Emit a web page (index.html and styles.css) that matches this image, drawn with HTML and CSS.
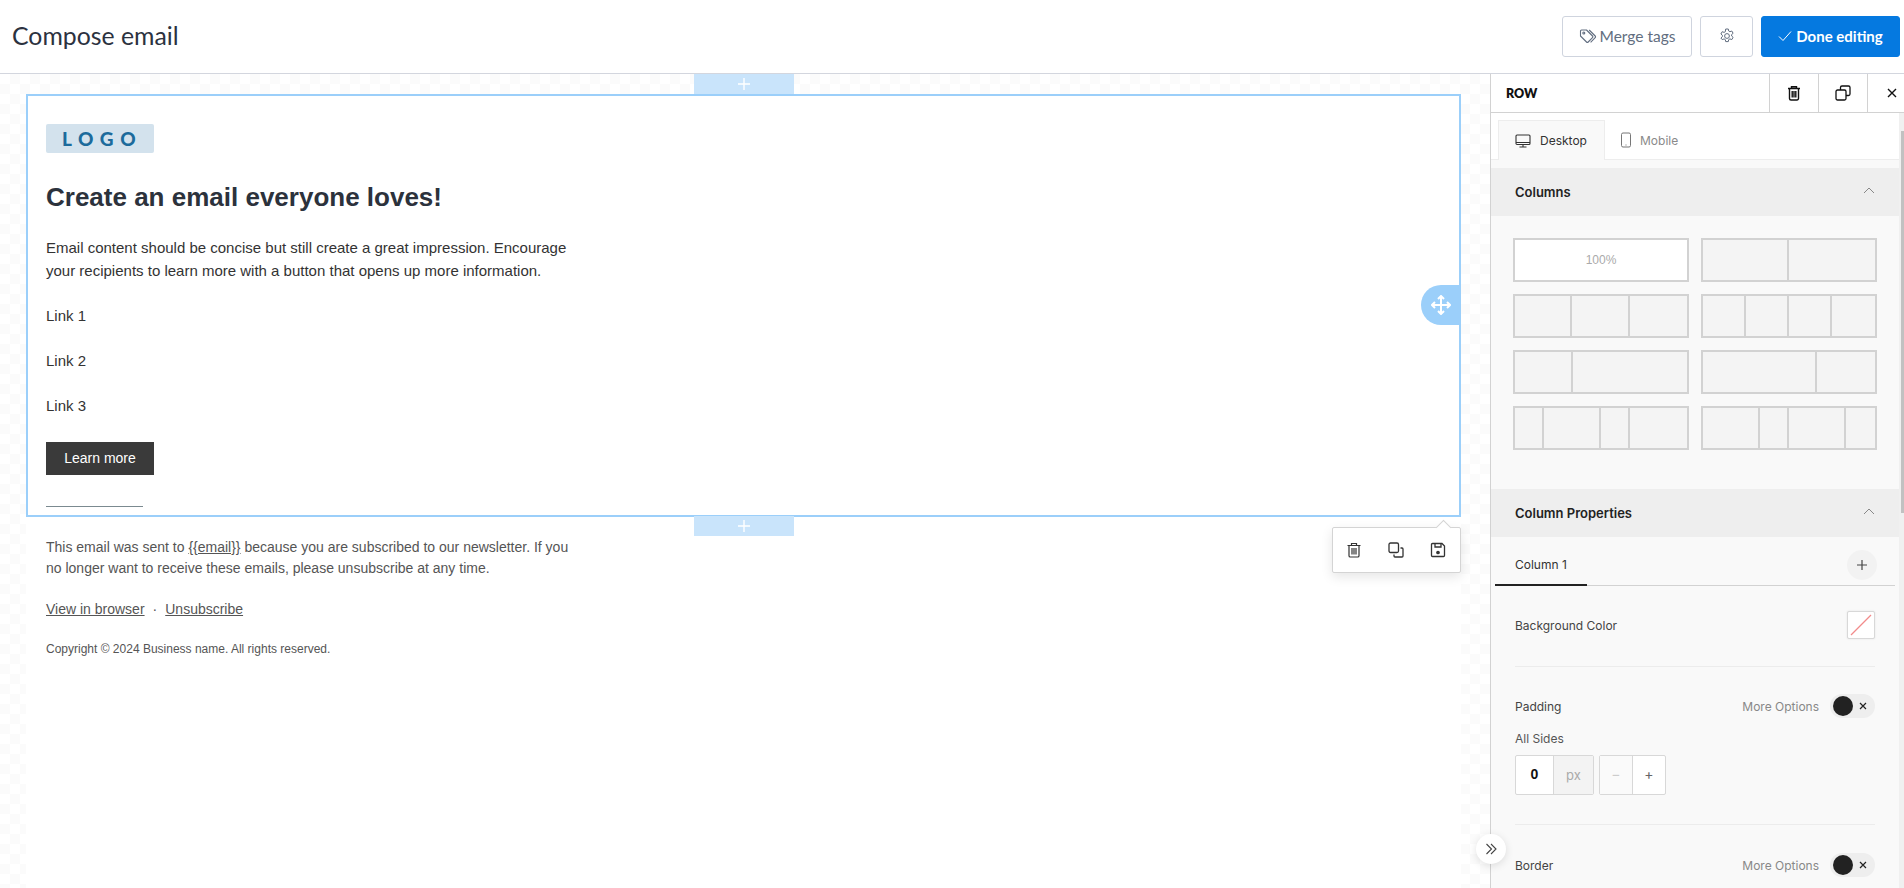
FILE: index.html
```html
<!DOCTYPE html>
<html lang="en">
<head>
<meta charset="utf-8">
<title>Compose email</title>
<link rel="stylesheet" href="styles.css">
</head>
<body>
<header class="topbar">
  <h1 class="page-title">Compose email</h1>
  <div class="top-actions">
    <button class="btn btn-merge">
      <svg class="ic18" viewBox="0 0 18 18" fill="none" stroke="#626e80" stroke-width="1.1" stroke-linejoin="round"><path d="M1.500 4v5l6 6a1.200 1.200 0 0 0 1.700 0l4.300-4.300a1.200 1.200 0 0 0 0-1.700l-6-6H2.500a1 1 0 0 0-1 1z"/><path d="M10.200 3l6 6a1.200 1.200 0 0 1 0 1.700l-4.600 4.600"/><circle cx="4.800" cy="6" r="1"/></svg>
      <span>Merge tags</span>
    </button>
    <button class="btn btn-gear" aria-label="Settings">
      <svg class="ic16" viewBox="0 0 16 16" fill="none" stroke="#626e80" stroke-width="1"><circle cx="8" cy="8" r="2.400"/><path d="M6.700 1h2.600l.4 2 1.200.7 1.900-.7 1.300 2.300-1.500 1.300v1.400l1.500 1.300-1.300 2.300-1.900-.7-1.200.7-.4 2H6.700l-.4-2-1.200-.7-1.900.7L1.900 10l1.500-1.300V7.300L1.900 6l1.300-2.300 1.900.7 1.200-.7z" stroke-linejoin="round"/></svg>
    </button>
    <button class="btn btn-done">
      <svg class="ic14" viewBox="0 0 14 14" fill="none" stroke="#fff" stroke-width="1"><path d="M1 7.500l4 4 8-9"/></svg>
      <span>Done editing</span>
    </button>
  </div>
</header>

<div class="workspace">
  <main class="canvas">
    <div class="email">
      <section class="row-selected">
        <div class="logo">LOGO</div>
        <h2 class="headline">Create an email everyone loves!</h2>
        <p class="body-text">Email content should be concise but still create a great impression. Encourage your recipients to learn more with a button that opens up more information.</p>
        <p class="link-line">Link 1</p>
        <p class="link-line">Link 2</p>
        <p class="link-line">Link 3</p>
        <a class="cta">Learn more</a>
        <hr class="rule">
        <div class="add-bar add-top"><svg viewBox="0 0 12 12" stroke="#fff" stroke-width="1.400"><path d="M6 0v12M0 6h12"/></svg></div>
        <div class="add-bar add-bottom"><svg viewBox="0 0 12 12" stroke="#fff" stroke-width="1.400"><path d="M6 0v12M0 6h12"/></svg></div>
        <div class="mover">
          <svg viewBox="0 0 20 20" fill="none" stroke="#fff" stroke-width="2"><path d="M10 1v18M1 10h18M7 4l3-3 3 3M7 16l3 3 3-3M4 7l-3 3 3 3M16 7l3 3-3 3"/></svg>
        </div>
        <div class="row-tools">
          <svg class="ic16" viewBox="0 0 16 16" fill="none" stroke="#333" stroke-width="1.200"><path d="M1.500 3.500h13M5.500 3.500V1.500h5v2M3 3.500v10.200A1.300 1.300 0 0 0 4.300 15h7.400a1.300 1.300 0 0 0 1.300-1.300V3.500M6 6v6.500M8 6v6.500M10 6v6.500"/></svg>
          <svg class="ic16" viewBox="0 0 16 16" fill="none" stroke="#333" stroke-width="1.300"><rect x="1" y="1" width="9.500" height="9.500" rx="1.500"/><path d="M12.500 6H14a1 1 0 0 1 1 1v7a1 1 0 0 1-1 1H7a1 1 0 0 1-1-1v-1.500"/></svg>
          <svg class="ic16" viewBox="0 0 16 16" fill="none" stroke="#333" stroke-width="1.300"><path d="M2.500 1.500h9.500l2.500 2.500v9.500a1 1 0 0 1-1 1h-11a1 1 0 0 1-1-1v-11a1 1 0 0 1 1-1z"/><path d="M5 1.500v3.500h6V1.500"/><circle cx="8" cy="10.500" r="1.200" fill="#333"/></svg>
        </div>
      </section>
      <footer class="mail-footer">
        <p class="foot-text">This email was sent to <u>{{email}}</u> because you are subscribed to our newsletter. If you no longer want to receive these emails, please unsubscribe at any time.</p>
        <p class="foot-links"><u>View in browser</u><span class="dot">·</span><u>Unsubscribe</u></p>
        <p class="foot-copy">Copyright © 2024 Business name. All rights reserved.</p>
      </footer>
    </div>
    <button class="collapse" aria-label="Collapse">
      <svg viewBox="0 0 12 12" fill="none" stroke="#444" stroke-width="1.100"><path d="M1.500 1l5 5-5 5M6 1l5 5-5 5"/></svg>
    </button>
  </main>

  <aside class="panel">
    <div class="panel-head">
      <span class="panel-title">ROW</span>
      <button class="head-btn"><svg class="ic16" viewBox="0 0 16 16" fill="none" stroke="#111" stroke-width="1.400"><path d="M2 3.500h12M5.500 3.500V1.800h5v1.700M3.500 3.500v10A1.500 1.500 0 0 0 5 15h6a1.500 1.500 0 0 0 1.500-1.500v-10M6.200 6v6.500M8 6v6.500M9.800 6v6.500"/></svg></button>
      <button class="head-btn"><svg class="ic16" viewBox="0 0 16 16" fill="none" stroke="#111" stroke-width="1.300"><path d="M5.500 5V2.500A1.500 1.500 0 0 1 7 1h6.500A1.500 1.500 0 0 1 15 2.500V9a1.500 1.500 0 0 1-1.500 1.500H11"/><rect x="1" y="5" width="10" height="10" rx="1.500"/></svg></button>
      <button class="head-btn head-close"><svg class="ic12" viewBox="0 0 12 12" stroke="#111" stroke-width="1.400"><path d="M2 2l8 8M10 2l-8 8"/></svg></button>
    </div>
    <div class="panel-scroll">
      <div class="panel-body">
        <div class="device-tabs">
          <div class="device-tab active">
            <svg class="ic16" viewBox="0 0 16 16" fill="none" stroke="#333" stroke-width="1.100"><rect x="1" y="2" width="14" height="9.500" rx="1"/><path d="M1 9.500h14M8 11.500V14M4.500 14h7"/></svg>
            <span>Desktop</span>
          </div>
          <div class="device-tab">
            <svg class="ic16" viewBox="0 0 16 16" fill="none" stroke="#777" stroke-width="1"><rect x="3.500" y="1" width="9" height="14" rx="1.500"/><path d="M7.500 13h1"/></svg>
            <span>Mobile</span>
          </div>
        </div>

        <div class="section-head">
          <span>Columns</span>
          <svg class="chev" viewBox="0 0 12 7" fill="none" stroke="#888" stroke-width="1"><path d="M1 6l5-5 5 5"/></svg>
        </div>
        <div class="layouts">
          <div class="layout solid"><span class="cell pct">100%</span></div>
          <div class="layout"><span class="cell g1"></span><span class="cell g1"></span></div>
          <div class="layout"><span class="cell g1"></span><span class="cell g1"></span><span class="cell g1"></span></div>
          <div class="layout"><span class="cell g1"></span><span class="cell g1"></span><span class="cell g1"></span><span class="cell g1"></span></div>
          <div class="layout"><span class="cell g1"></span><span class="cell g2"></span></div>
          <div class="layout"><span class="cell g2"></span><span class="cell g1"></span></div>
          <div class="layout"><span class="cell g1"></span><span class="cell g2"></span><span class="cell g1"></span><span class="cell g2"></span></div>
          <div class="layout"><span class="cell g2"></span><span class="cell g1"></span><span class="cell g2"></span><span class="cell g1"></span></div>
        </div>

        <div class="section-head">
          <span>Column Properties</span>
          <svg class="chev" viewBox="0 0 12 7" fill="none" stroke="#888" stroke-width="1"><path d="M1 6l5-5 5 5"/></svg>
        </div>
        <div class="col-tabs">
          <span class="col-tab">Column 1</span>
          <button class="col-add"><svg class="ic12" viewBox="0 0 12 12" stroke="#444" stroke-width="1.200"><path d="M6 1v10M1 6h10"/></svg></button>
        </div>
        <div class="prop prop-bg">
          <span class="prop-label">Background Color</span>
          <div class="swatch"><svg viewBox="0 0 24 24" stroke="#f28b8b" stroke-width="1.300"><path d="M2 22L22 2"/></svg></div>
        </div>
        <div class="prop prop-pad">
          <div class="prop-line">
            <span class="prop-label">Padding</span>
            <span class="more">More Options</span>
            <span class="toggle"><i class="knob"></i><svg class="tx" viewBox="0 0 8 8" stroke="#222" stroke-width="1.200"><path d="M1 1l6 6M7 1L1 7"/></svg></span>
          </div>
          <div class="sub-label">All Sides</div>
          <div class="steppers">
            <div class="num-field"><span class="num">0</span><span class="unit">px</span></div>
            <div class="step-field"><span class="step off">−</span><span class="step">+</span></div>
          </div>
        </div>
        <div class="prop prop-border">
          <div class="prop-line">
            <span class="prop-label">Border</span>
            <span class="more">More Options</span>
            <span class="toggle"><i class="knob"></i><svg class="tx" viewBox="0 0 8 8" stroke="#222" stroke-width="1.200"><path d="M1 1l6 6M7 1L1 7"/></svg></span>
          </div>
        </div>
      </div>
      <div class="scrollbar"><div class="thumb"></div></div>
    </div>
  </aside>
</div>
</body>
</html>
```
FILE: styles.css
```css
* { box-sizing: border-box; }
html, body { margin: 0; height: 100%; overflow: hidden; background: #fff; }
body { font-family: "Liberation Sans", Arial, sans-serif; color: #222; }
p, h1, h2 { margin: 0; }
button { font: inherit; padding: 0; background: none; border: 0; }
svg { display: block; }
.ic18 { width: 18px; height: 18px; }
.ic16 { width: 16px; height: 16px; }
.ic14 { width: 14px; height: 14px; }
.ic12 { width: 12px; height: 12px; }

.topbar { height: 74px; border-bottom: 1px solid #d3d6de; display: flex; align-items: center; justify-content: space-between; padding: 0 4px 0 12px; }
.page-title { font: 400 24.800px Lato, "Noto Sans", sans-serif; color: #2c3240; margin-top: -2px; }
.top-actions { display: flex; gap: 8px; }
.btn { height: 41px; border: 1px solid #cfd4de; border-radius: 3px; display: flex; align-items: center; justify-content: center; font: 400 15.500px Lato, "Noto Sans", sans-serif; color: #626e80; background: #fff; padding-bottom: 1px; }
.btn-merge { width: 130px; gap: 3px; }
.btn-gear { width: 53px; }
.btn-done { width: 139px; gap: 4px; background: #0579e0; border-color: #0579e0; color: #fff; font-size: 15px; font-weight: 700; }

.workspace { display: flex; height: 814px; }
.canvas { position: relative; flex: 1; padding: 20px 0 0 26px;
  background: repeating-conic-gradient(#fbfbfb 0 25%, #ffffff 0 50%) 0 0 / 20px 20px; }
.email { width: 1435px; height: 100%; background: #fff; }

.row-selected { position: relative; height: 423px; border: 2px solid #9bcffa; padding: 28px 0 0 18px; }
.logo { width: 108px; height: 29px; background: #d3e2ed; border-radius: 2px; color: #1c6b9c; font: 900 19px/29px Lato, "Noto Sans", sans-serif; letter-spacing: 6.500px; text-align: center; padding-left: 4px; }
.headline { font: 700 26px/34px "Liberation Sans", Arial, sans-serif; color: #2c323c; margin-top: 27px; }
.body-text { width: 530px; font-size: 15px; line-height: 23px; color: #333; margin-top: 22px; }
.link-line { font-size: 15px; line-height: 23px; color: #333; margin-top: 22px; }
.cta { display: block; width: 108px; height: 33px; margin-top: 25px; background: #3a3a3a; color: #fff; font-size: 14px; line-height: 32px; text-align: center; }
.rule { width: 97px; height: 1px; margin: 31px 0 0; border: 0; background: #7b8a90; }

.add-bar { position: absolute; left: 666px; width: 100px; height: 20px; background: #c9e4fb; display: flex; align-items: center; justify-content: center; }
.add-bar svg { width: 12px; height: 12px; }
.add-top { top: -22px; }
.add-bottom { bottom: -21px; }
.mover { position: absolute; right: -2px; top: 189px; width: 40px; height: 40px; border-radius: 20px 0 0 20px; background: #9bcffa; display: flex; align-items: center; justify-content: center; }
.mover svg { width: 20px; height: 20px; }
.row-tools { position: absolute; right: -2px; top: 431px; width: 129px; height: 46px; background: #fff; border: 1px solid #d4d4d4; border-radius: 2px; box-shadow: 0 4px 12px rgba(0,0,0,.1); display: flex; align-items: center; justify-content: space-between; padding: 0 14px 0 13px; }
.row-tools::before { content: ""; position: absolute; top: -6px; right: 11px; width: 10px; height: 10px; background: #fff; border-left: 1px solid #d4d4d4; border-top: 1px solid #d4d4d4; transform: rotate(45deg); }

.mail-footer { padding: 20px 0 0 20px; color: #555; }
.foot-text { width: 535px; font-size: 14px; line-height: 21px; }
.foot-links { font-size: 14px; line-height: 21px; margin-top: 20px; }
.dot { margin: 0 8px; }
.foot-copy { font-size: 12px; line-height: 16px; margin-top: 21px; }

.collapse { position: absolute; right: -16px; top: 760px; width: 30px; height: 30px; border-radius: 50%; background: #fff; box-shadow: 0 2px 8px rgba(0,0,0,.12); display: flex; align-items: center; justify-content: center; z-index: 2; }
.collapse svg { width: 12px; height: 12px; }

.panel { width: 414px; border-left: 1px solid #d2d2d2; font-family: Inter, "Noto Sans", sans-serif; display: flex; flex-direction: column; background: #fff; overflow: hidden; }
.panel-head { height: 39px; flex: none; display: flex; align-items: stretch; border-bottom: 1px solid #d2d2d2; }
.panel-title { flex: 0 0 278px; font: 800 12.500px/40px Lato, "Noto Sans", sans-serif; padding-left: 15px; color: #111; }
.head-btn { flex: 0 0 49px; border-left: 1px solid #d2d2d2; display: flex; align-items: center; justify-content: center; }

.panel-scroll { flex: 1; display: flex; min-height: 0; }
.panel-body { flex: 1; min-width: 0; background: #f9f9f9; }
.scrollbar { width: 5px; background: #f0f0f0; padding: 18px 0 0 2px; }
.thumb { height: 382px; background: #c1c1c1; }

.device-tabs { height: 47px; background: #fff; padding: 7px 0 0 7px; display: flex; border-bottom: 1px solid #ededed; margin-bottom: 8px; }
.device-tab { width: 107px; height: 40px; display: flex; align-items: center; gap: 6px; padding-left: 13px; font-size: 12px; color: #8a8a8a; }
.device-tab.active { gap: 9px; background: #f9f9f9; border: 1px solid #ededed; border-bottom: 0; color: #333; padding-left: 16px; }

.section-head { height: 48px; background: #eee; display: flex; align-items: center; justify-content: space-between; padding: 0 24px; font-size: 13px; font-weight: 600; color: #222; }
.chev { width: 12px; height: 7px; margin-top: -3px; }

.layouts { height: 273px; padding: 22px 22px 0; display: grid; grid-template-columns: 176px 176px; grid-auto-rows: 44px; gap: 12px; }
.layout { display: flex; border: 2px solid #d2d2d2; background: #f4f4f4; }
.layout.solid { background: #fff; }
.cell { flex: 1 1 0; border-right: 2px solid #d2d2d2; }
.cell:last-child { border-right-color: transparent; }
.cell.g2 { flex-grow: 2; }
.pct { border: 0; font: 400 12px/40px "Liberation Sans", Arial, sans-serif; color: #aaa; text-align: center; }

.col-tabs { height: 49px; margin: 0 4px; border-bottom: 1px solid #d2d2d2; display: flex; justify-content: space-between; }
.col-tab { width: 92px; height: 49px; border-bottom: 2px solid #222; font-size: 12px; line-height: 56px; padding-left: 20px; color: #333; }
.col-add { width: 30px; height: 30px; border-radius: 50%; background: #f2f2f2; display: flex; align-items: center; justify-content: center; margin: 13px 18px 0 0; }

.prop { margin: 0 24px; }
.prop-label { font-size: 12px; color: #444; }
.prop-bg { height: 81px; display: flex; align-items: center; justify-content: space-between; border-bottom: 1px solid #ececec; padding-bottom: 2px; }
.swatch { width: 28px; height: 28px; background: #fff; border: 1px solid #d8d8d8; border-radius: 2px; box-shadow: 0 0 2px rgba(0,0,0,.1); padding: 1px; }
.swatch svg { width: 24px; height: 24px; }
.prop-pad { height: 158px; padding-top: 27px; border-bottom: 1px solid #ececec; }
.prop-line { display: flex; align-items: center; height: 24px; }
.prop-line .prop-label { flex: 1; }
.more { font-size: 12px; color: #888; margin-right: 11px; }
.toggle { position: relative; width: 45px; height: 24px; border-radius: 12px; background: #eee; display: block; }
.knob { position: absolute; left: 3px; top: 2px; width: 20px; height: 20px; border-radius: 50%; background: #222; }
.tx { position: absolute; right: 8px; top: 8px; width: 8px; height: 8px; }
.sub-label { font-size: 12px; color: #555; margin-top: 13px; line-height: 16px; }
.steppers { display: flex; gap: 5px; margin-top: 8px; }
.num-field, .step-field { display: flex; height: 40px; border: 1px solid #d8d8d8; border-radius: 2px; background: #fff; }
.num { width: 38px; text-align: center; font: 700 14px/36px "Liberation Sans", sans-serif; color: #111; border-right: 1px solid #d8d8d8; }
.unit { width: 39px; text-align: center; background: #f3f3f3; font-size: 13px; line-height: 38px; color: #aaa; }
.step { width: 32px; text-align: center; font-size: 14px; line-height: 36px; color: #666; }
.step.off { width: 33px; color: #ccc; background: #fafafa; border-right: 1px solid #d8d8d8; }
.prop-border { padding-top: 28px; }
```
